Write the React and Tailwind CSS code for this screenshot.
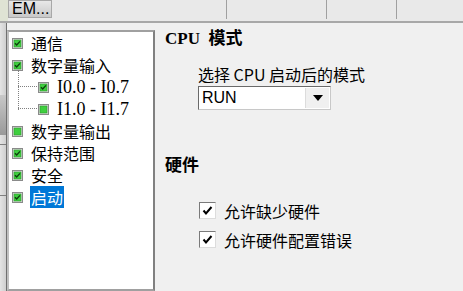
import React from "react";

const cjk = '"Noto Sans CJK SC", "Liberation Sans", sans-serif';
const serifCjk = '"Liberation Serif", "Noto Sans CJK SC", serif';

function TreeBox({ checked }) {
  return (
    <svg width="11" height="11" viewBox="0 0 11 11" className="shrink-0">
      <rect x="0.5" y="0.5" width="10" height="10" fill="#d8d8d8" stroke="#8a8a8a" />
      <rect x="2" y="2" width="7" height="7" fill="#3fcf3f" stroke="#2a9a2a" strokeWidth="0.6" />
      {checked && <path d="M3 5.2 L4.7 7 L8 3.4" fill="none" stroke="#0d3d0d" strokeWidth="1.4" />}
    </svg>
  );
}

function TreeRow({ label, checked, sub, selected, serif }) {
  return (
    <div className={`h-[22px] flex items-center ${sub ? "pl-[29px]" : "pl-[3px]"}`}>
      <TreeBox checked={checked} />
      <span
        className={`ml-[7px] px-[1px] h-[22px] leading-[22px] ${serif ? "text-[18px]" : "text-[16px]"} ${selected ? "bg-[#0078d7] text-white" : "text-black"}`}
        style={{ fontFamily: serif ? serifCjk : cjk }}
      >
        {label}
      </span>
    </div>
  );
}

function Check({ label }) {
  return (
    <div className="flex items-center h-[29px]">
      <div className="w-[17px] h-[17px] bg-white border border-t-[#7a7a7a] border-l-[#7a7a7a] border-r-[#dcdcdc] border-b-[#dcdcdc] flex items-center justify-center">
        <svg width="11" height="11" viewBox="0 0 11 11">
          <path d="M1.5 5.5 L4 8.5 L9.5 2" fill="none" stroke="#000" strokeWidth="2" />
        </svg>
      </div>
      <span className="ml-[8px] text-[16px] text-black" style={{ fontFamily: cjk }}>{label}</span>
    </div>
  );
}

export default function App() {
  return (
    <div className="w-[463px] h-[291px] overflow-hidden flex flex-col bg-[#f0f0f0]">
      <div className="h-[21px] bg-[#e9e9e9] flex shrink-0 relative">
        <div className="w-[8px] bg-[#dfe3d4]" />
        <div className="w-[44px] h-[18px] border border-[#a8a8a8] bg-gradient-to-b from-[#e8e8e8] to-[#c8c8c8] flex items-center pl-[3px] text-[16px] leading-none text-black overflow-hidden whitespace-nowrap" style={{ fontFamily: '"Liberation Sans", sans-serif' }}>
          EM...
        </div>
        <div className="ml-[174px] w-px h-[19px] bg-[#a0a0a0]" />
        <div className="ml-[99px] w-px h-[19px] bg-[#a0a0a0]" />
        <div className="ml-[69px] w-px h-[19px] bg-[#a0a0a0]" />
      </div>
      <div className="h-[2px] bg-[#a8a8a8] shrink-0" />
      <div className="flex flex-1 min-h-0">
        <div className="w-[7px] bg-gradient-to-r from-[#e4e4e4] to-[#cfcfcf] border-r border-[#707070] flex flex-col">
          <div className="h-[72px]" />
          <div className="h-[40px] bg-gradient-to-b from-[#c8c8c8] to-[#9a9a9a]" />
          <div className="h-[9px]" />
          <div className="h-px bg-[#808080]" />
          <div className="h-[50px]" />
          <div className="h-px bg-[#808080]" />
        </div>
        <div className="pt-[7px] shrink-0">
          <div className="w-[148px] h-full bg-white border-2 border-t-[#a0a0a0] border-l-[#c0c0c0] border-r-[#808080] border-b-[#a0a0a0] relative">
            <TreeRow label="通信" checked />
            <TreeRow label="数字量输入" checked />
            <TreeRow label="I0.0 - I0.7" checked sub serif />
            <TreeRow label="I1.0 - I1.7" sub serif />
            <TreeRow label="数字量输出" />
            <TreeRow label="保持范围" checked />
            <TreeRow label="安全" checked />
            <TreeRow label="启动" checked selected />
            <div className="absolute left-[9px] top-[38px] w-0 h-[40px] border-l border-dotted border-[#808080]" />
            <div className="absolute left-[9px] top-[54px] w-[19px] h-0 border-t border-dotted border-[#808080]" />
            <div className="absolute left-[9px] top-[76px] w-[19px] h-0 border-t border-dotted border-[#808080]" />
          </div>
        </div>
        <div className="flex-1 pl-[10px] pt-[5px]">
          <div className="text-[17px] font-bold text-black leading-[22px]" style={{ fontFamily: serifCjk }}>
            CPU&nbsp; 模式
          </div>
          <div className="pl-[33px] mt-[14px]">
            <div className="text-[16px] leading-[20px] text-black" style={{ fontFamily: cjk }}>选择 CPU 启动后的模式</div>
            <div className="mt-[2px] w-[133px] h-[24px] bg-white border border-t-[#6a6a6a] border-l-[#6a6a6a] border-r-[#c8c8c8] border-b-[#c8c8c8] flex items-center">
              <span className="pl-[3px] flex-1 text-[16px] text-black" style={{ fontFamily: '"Liberation Sans", sans-serif' }}>RUN</span>
              <div className="w-[24px] h-[20px] mr-[1px] bg-[#f0f0f0] border-l border-[#dcdcdc] flex items-center justify-center">
                <svg width="10" height="6" viewBox="0 0 10 6"><path d="M0 0 H10 L5 6 Z" fill="#000" /></svg>
              </div>
            </div>
          </div>
          <div className="mt-[45px] text-[17px] font-bold text-black leading-[22px]" style={{ fontFamily: serifCjk }}>硬件</div>
          <div className="pl-[34px] mt-[19px]">
            <Check label="允许缺少硬件" />
            <Check label="允许硬件配置错误" />
          </div>
        </div>
      </div>
    </div>
  );
}
